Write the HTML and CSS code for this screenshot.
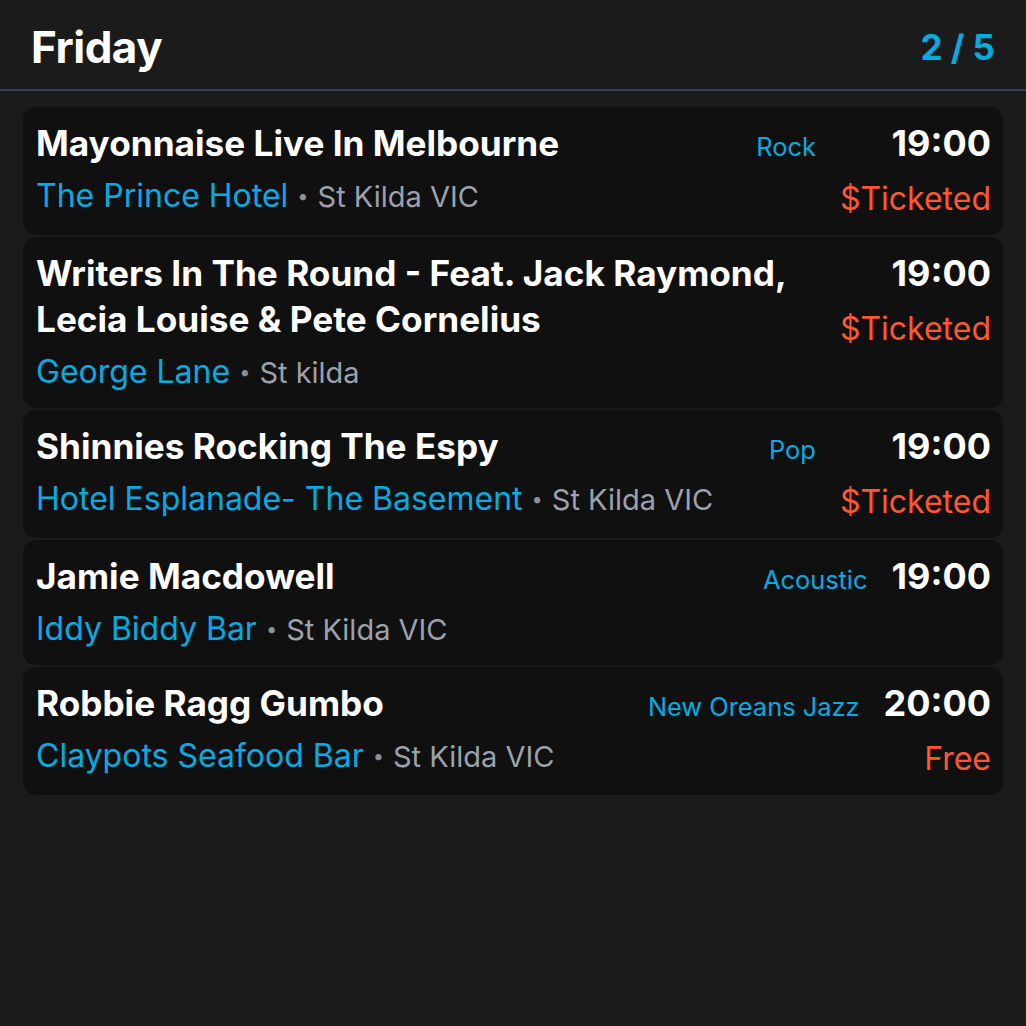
FILE: index.html
```html
<!DOCTYPE html>
<html>
<head>
<meta charset="utf-8">
<link rel="stylesheet" href="styles.css">
</head>
<body>
<div class="screen">
  <header class="header">
    <h1 class="day">Friday</h1>
    <div class="page">2 / 5</div>
  </header>
  <div class="list">
    <div class="card">
      <div class="main">
        <div class="title">Mayonnaise Live In Melbourne</div>
        <div class="venue"><span class="vname">The Prince Hotel</span><span class="dot">•</span><span class="loc">St Kilda VIC</span></div>
      </div>
      <div class="genre">Rock</div>
      <div class="side">
        <div class="time">19:00</div>
        <div class="price">$Ticketed</div>
      </div>
    </div>
    <div class="card">
      <div class="main">
        <div class="title">Writers In The Round - Feat. Jack Raymond, Lecia Louise &amp; Pete Cornelius</div>
        <div class="venue"><span class="vname">George Lane</span><span class="dot">•</span><span class="loc">St kilda</span></div>
      </div>
      <div class="side">
        <div class="time">19:00</div>
        <div class="price">$Ticketed</div>
      </div>
    </div>
    <div class="card">
      <div class="main">
        <div class="title">Shinnies Rocking The Espy</div>
        <div class="venue"><span class="vname">Hotel Esplanade- The Basement</span><span class="dot">•</span><span class="loc">St Kilda VIC</span></div>
      </div>
      <div class="genre">Pop</div>
      <div class="side">
        <div class="time">19:00</div>
        <div class="price">$Ticketed</div>
      </div>
    </div>
    <div class="card">
      <div class="main">
        <div class="title">Jamie Macdowell</div>
        <div class="venue"><span class="vname">Iddy Biddy Bar</span><span class="dot">•</span><span class="loc">St Kilda VIC</span></div>
      </div>
      <div class="genre">Acoustic</div>
      <div class="side">
        <div class="time">19:00</div>
      </div>
    </div>
    <div class="card">
      <div class="main">
        <div class="title">Robbie Ragg Gumbo</div>
        <div class="venue"><span class="vname">Claypots Seafood Bar</span><span class="dot">•</span><span class="loc">St Kilda VIC</span></div>
      </div>
      <div class="genre">New Oreans Jazz</div>
      <div class="side">
        <div class="time">20:00</div>
        <div class="price">Free</div>
      </div>
    </div>
  </div>
</div>
</body>
</html>
```
FILE: styles.css
```css
html, body {
  margin: 0;
  padding: 0;
  background: #1b1b1b;
}
body {
  font-family: Inter, "Noto Sans", sans-serif;
  color: #fff;
  width: 1026px;
  height: 1026px;
  overflow: hidden;
}
.screen {
  display: flex;
  flex-direction: column;
}
.header {
  display: flex;
  justify-content: space-between;
  align-items: center;
  padding: 5px 31px 0 31px;
  height: 91px;
  box-sizing: border-box;
  border-bottom: 2px solid #3a4050;
}
.day {
  margin: 0;
  font-size: 44px;
  line-height: 56px;
  font-weight: 700;
  letter-spacing: -0.5px;
}
.page {
  font-size: 35px;
  line-height: 56px;
  font-weight: 700;
  color: #08aae2;
}
.list {
  display: flex;
  flex-direction: column;
  gap: 2px;
  padding: 16px 23px 0 23px;
}
.card {
  background: #101010;
  border-radius: 13px;
  padding: 13px 12px 15px 13px;
  display: flex;
  align-items: baseline;
}
.main {
  flex: 1;
  min-width: 0;
  padding-right: 30px;
}
.title {
  font-size: 35.2px;
  line-height: 46px;
  font-weight: 700;
}
.venue {
  margin-top: 9px;
  font-size: 32px;
  line-height: 42px;
  white-space: nowrap;
}
.vname {
  color: #08aae2;
}
.dot {
  color: #8b909b;
  font-size: 20px;
  line-height: 1;
  margin: 0 9px;
  position: relative;
  top: -4px;
}
.loc {
  color: #9ca1ac;
  font-size: 29px;
  line-height: 1;
}
.genre {
  font-size: 25.4px;
  color: #08aae2;
  margin-right: 24px;
  white-space: nowrap;
}
.side {
  display: flex;
  flex-direction: column;
  align-items: flex-end;
}
.time {
  font-size: 36px;
  line-height: 46px;
  font-weight: 700;
}
.price {
  margin-top: 12px;
  font-size: 32px;
  line-height: 42px;
  color: #ff5732;
}
```
